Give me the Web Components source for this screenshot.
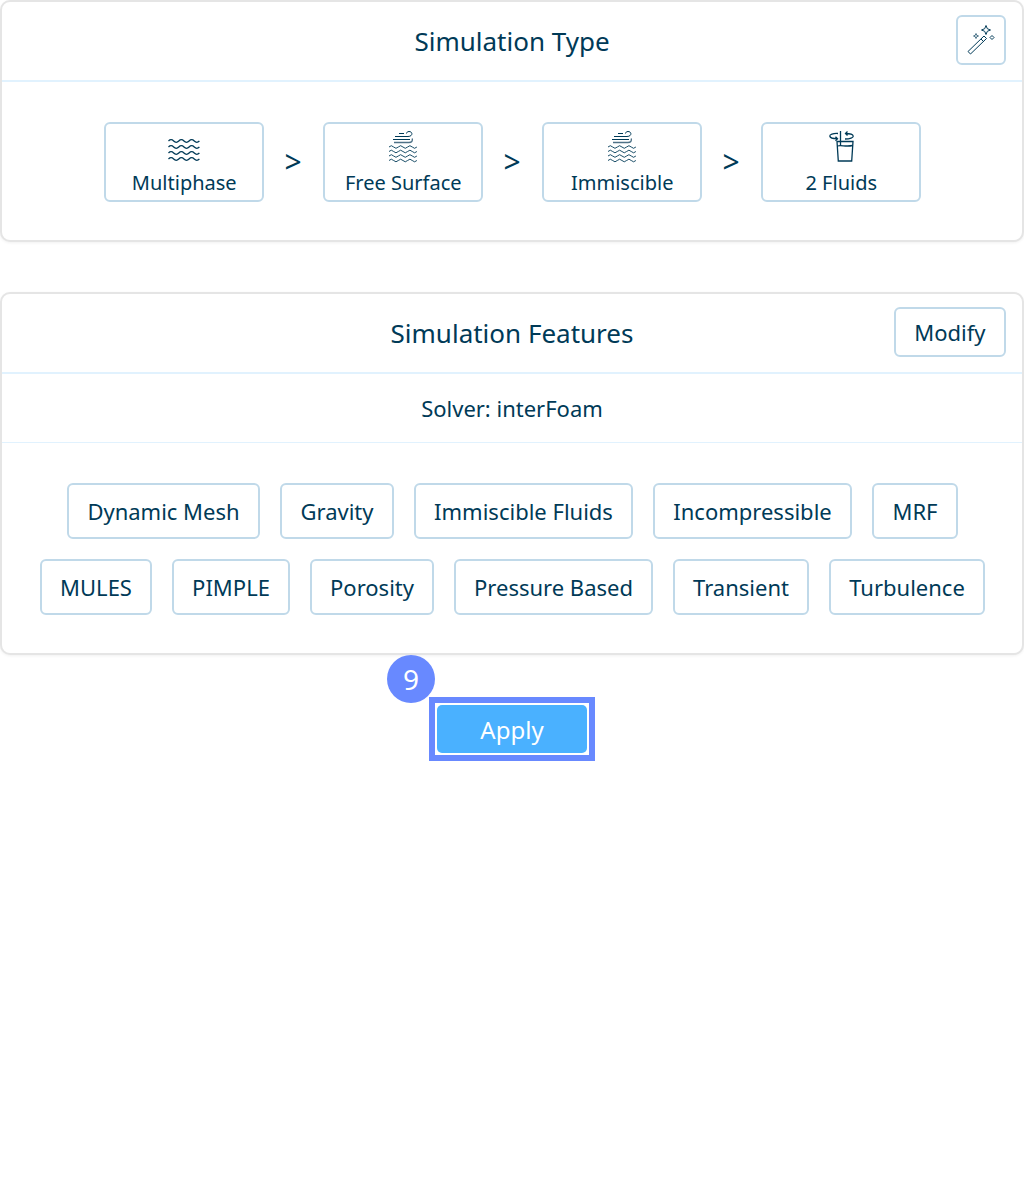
<!DOCTYPE html>
<html lang="en">
<head>
<meta charset="utf-8">
<title>Simulation</title>
<style>
  html, body { margin: 0; background: #fff; }
  body { font-family: "Noto Sans", sans-serif; color: #003a57; }
  sim-card + sim-card { margin-top: 50px; }
</style>
</head>
<body>
<sim-page>
  <sim-card heading="Simulation Type">
    <sim-button slot="action" square>
      <svg width="28" height="30" viewBox="0 0 28 30" fill="none" stroke="#003a57" stroke-width="1">
        <path d="M1 26.5 L17 11 L19.5 13.5 L3.5 29 Z"/>
        <path d="M14 14 L16.5 16.5"/>
        <path d="M19 0.5 L20.3 3.7 L23.5 5 L20.3 6.3 L19 9.5 L17.7 6.3 L14.5 5 L17.7 3.7 Z"/>
        <path d="M25 10.5 L27 12.5 L25 14.5 L23 12.5 Z"/>
        <path d="M9 8.5 L9.7 10.3 L11.5 11 L9.7 11.7 L9 13.5 L8.3 11.7 L6.5 11 L8.3 10.3 Z" stroke-width=".7"/>
      </svg>
    </sim-button>
    <sim-trail>
      <sim-tile label="Multiphase" icon="waves"></sim-tile>
      <sim-tile label="Free Surface" icon="wind"></sim-tile>
      <sim-tile label="Immiscible" icon="wind"></sim-tile>
      <sim-tile label="2 Fluids" icon="glass"></sim-tile>
    </sim-trail>
  </sim-card>

  <sim-card heading="Simulation Features">
    <sim-button slot="action">Modify</sim-button>
    <sim-solver>Solver: interFoam</sim-solver>
    <sim-tags>
      <sim-tag w="193">Dynamic Mesh</sim-tag>
      <sim-tag w="114">Gravity</sim-tag>
      <sim-tag w="219">Immiscible Fluids</sim-tag>
      <sim-tag w="199">Incompressible</sim-tag>
      <sim-tag w="86">MRF</sim-tag>
      <sim-tag w="112">MULES</sim-tag>
      <sim-tag w="118">PIMPLE</sim-tag>
      <sim-tag w="124">Porosity</sim-tag>
      <sim-tag w="199">Pressure Based</sim-tag>
      <sim-tag w="136">Transient</sim-tag>
      <sim-tag w="156">Turbulence</sim-tag>
    </sim-tags>
  </sim-card>

  <sim-apply step="9">Apply</sim-apply>
</sim-page>

<script>
const wave = (y, x0, n, w) => {
  let d = `M${x0} ${y}`;
  for (let i = 0; i < n; i++) d += ` q${w / 4} -2.6 ${w / 2} 0 t${w / 2} 0`;
  return d;
};
const ICONS = {
  waves: `<svg width="32" height="24" viewBox="0 0 32 24" fill="none" stroke="#003a57" stroke-width="1.3">
    ${[3, 9, 15, 21].map((y) => `<path d="${wave(y, 0.5, 3, 10.3)}"/>`).join("")}
  </svg>`,
  wind: `<svg width="30" height="32" viewBox="0 0 30 32" fill="none" stroke="#003a57" stroke-width="1" style="margin-bottom:6px">
    <path d="M11 2.5 H16"/>
    <path d="M7 5.5 H20 C25 5.5 25 0.5 21 0.5 C19.5 .5 18.5 1.5 18.5 2.5"/>
    <path d="M5 8.5 H22"/>
    <path d="M6 11.5 H21 C23.5 11.5 25 10 24.2 7.5" stroke-width="1.4" stroke="#4f7287"/>
    ${[16, 20.5, 25, 29.5].map((y) => `<path d="${wave(y, 1, 3, 9.3)}" stroke-width=".9"/>`).join("")}
  </svg>`,
  glass: `<svg width="26" height="33" viewBox="0 0 26 33" fill="none" stroke="#003a57" stroke-width="1.3" style="margin-bottom:8px">
    <path d="M9 11.5 H25 L23.7 31 H10.3 Z"/>
    <path d="M9.4 16 C13 14.8 18 17 24.7 15.5"/>
    <path d="M12.5 1 V16"/>
    <path d="M10 3.5 C5 3.2 1.5 4.5 1.8 6 C2.1 7.5 5 8.7 9 8.7 M7.5 6.7 L9.5 8.7 L7.5 10.7"/>
    <path d="M17 9 C22 9 25.5 7.6 25.2 6 C24.9 4.5 21.5 3.5 17.5 3.5 M19.5 1.5 L17.5 3.5 L19.5 5.5"/>
  </svg>`,
};

// small helper so each element below only has to give its template
function shadow(el, html) {
  el.attachShadow({ mode: "open" }).innerHTML = html;
}

class SimPage extends HTMLElement {
  constructor() {
    super();
    shadow(this, `<style>:host { display:block; color:#003a57; font-family:"Noto Sans",sans-serif; }</style><slot></slot>`);
  }
}

class SimCard extends HTMLElement {
  constructor() {
    super();
    shadow(this, `
      <style>
        :host { display:block; }
        .card {
          border: 2px solid #e5e5e5;
          border-radius: 10px;
          background: #fff;
          box-shadow: 0 1px 3px rgba(0,0,0,.06);
        }
        header {
          position: relative;
          height: 78px;
          display: flex;
          align-items: center;
          justify-content: center;
          border-bottom: 2px solid #e1f2fe;
        }
        h2 { margin: 0; font-size: 26px; font-weight: 400; line-height: 32px; }
        .action { position: absolute; right: 16px; top: 13px; display: flex; }
      </style>
      <section class="card">
        <header>
          <h2>${this.getAttribute("heading")}</h2>
          <div class="action"><slot name="action"></slot></div>
        </header>
        <slot></slot>
      </section>`);
  }
}

class SimButton extends HTMLElement {
  constructor() {
    super();
    const w = this.hasAttribute("square") ? "width:50px;" : "padding:0 18.5px;";
    shadow(this, `
      <style>
        :host { display:flex; }
        button {
          ${w}
          height: 50px;
          box-sizing: border-box;
          display: flex;
          align-items: center;
          justify-content: center;
          background: #fff;
          border: 2px solid #c0d9e9;
          border-radius: 6px;
          color: inherit;
          font: 400 22px/30px "Noto Sans", sans-serif;
        }
      </style>
      <button><slot></slot></button>`);
  }
}

class SimTrail extends HTMLElement {
  constructor() {
    super();
    shadow(this, `
      <style>
        :host {
          display: flex;
          justify-content: center;
          align-items: center;
          gap: 59px;
          padding: 40px 0 38px;
        }
      </style>
      <slot></slot>`);
  }
}

class SimTile extends HTMLElement {
  constructor() {
    super();
    const last = this.nextElementSibling === null;
    shadow(this, `
      <style>
        :host { display:block; position:relative; }
        .tile {
          box-sizing: border-box;
          width: 160px;
          height: 80px;
          border: 2px solid #c0d9e9;
          border-radius: 6px;
          display: flex;
          flex-direction: column;
          align-items: center;
          justify-content: flex-end;
          padding-bottom: 4px;
        }
        .icon { height: 38px; display:flex; align-items:center; justify-content:center; }
        .label { font-size: 20px; line-height: 27px; padding-left: 1.5px; }
        .sep {
          position: absolute;
          left: 181px;
          top: 21px;
          font-size: 30px;
          line-height: 38px;
        }
      </style>
      <div class="tile">
        <div class="icon">${ICONS[this.getAttribute("icon")]}</div>
        <div class="label">${this.getAttribute("label")}</div>
      </div>
      ${last ? "" : `<span class="sep">&gt;</span>`}`);
  }
}

class SimSolver extends HTMLElement {
  constructor() {
    super();
    shadow(this, `
      <style>
        :host {
          display: flex;
          justify-content: center;
          align-items: center;
          height: 68px;
          border-bottom: 1px solid #e1f2fe;
          font-size: 22px;
        }
      </style>
      <slot></slot>`);
  }
}

class SimTags extends HTMLElement {
  constructor() {
    super();
    shadow(this, `
      <style>
        :host {
          display: flex;
          flex-wrap: wrap;
          justify-content: center;
          gap: 20px;
          padding: 40px 19.5px 38px 20.5px;
        }
      </style>
      <slot></slot>`);
  }
}

class SimTag extends HTMLElement {
  constructor() {
    super();
    shadow(this, `
      <style>
        :host {
          display: flex;
          align-items: center;
          justify-content: center;
          box-sizing: border-box;
          width: ${this.getAttribute("w")}px;
          height: 56px;
          border: 2px solid #c0d9e9;
          border-radius: 6px;
          font-size: 22px;
          white-space: nowrap;
        }
      </style>
      <slot></slot>`);
  }
}

class SimApply extends HTMLElement {
  constructor() {
    super();
    shadow(this, `
      <style>
        :host { display:flex; justify-content:center; padding-top:42px; }
        .wrap { position:relative; border:6px solid #6889ff; padding:2px; }
        button {
          display: block;
          box-sizing: border-box;
          width: 150px;
          height: 48px;
          background: #4ab1ff;
          border: 0;
          border-radius: 5px;
          color: #fff;
          font: 400 24px/46px "Noto Sans", sans-serif;
          padding: 2px 0 0;
        }
        .badge {
          position: absolute;
          left: -48px;
          top: -48px;
          width: 48px;
          height: 48px;
          border-radius: 50%;
          background: #6889ff;
          color: #fff;
          font-size: 28px;
          line-height: 48px;
          text-align: center;
        }
      </style>
      <div class="wrap">
        <button><slot></slot></button>
        <div class="badge">${this.getAttribute("step")}</div>
      </div>`);
  }
}

customElements.define("sim-page", SimPage);
customElements.define("sim-card", SimCard);
customElements.define("sim-button", SimButton);
customElements.define("sim-trail", SimTrail);
customElements.define("sim-tile", SimTile);
customElements.define("sim-solver", SimSolver);
customElements.define("sim-tags", SimTags);
customElements.define("sim-tag", SimTag);
customElements.define("sim-apply", SimApply);
</script>
</body>
</html>
